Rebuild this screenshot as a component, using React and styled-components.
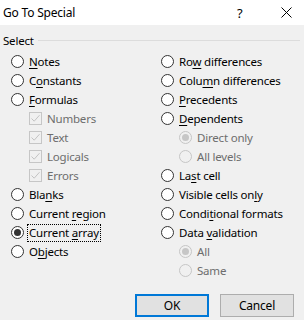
import styled, { createGlobalStyle } from "styled-components";

const GlobalStyle = createGlobalStyle`
  html, body {
    margin: 0;
    padding: 0;
    background: #f0f0f0;
  }
  body {
    font-family: "Noto Sans", "Open Sans", sans-serif;
    font-size: 11.5px;
    letter-spacing: -0.2px;
    color: #000;
  }
`;

const leftItems = [
  { label: "Notes", key: 0 },
  { label: "Constants", key: 1 },
  { label: "Formulas", key: 0 },
  { label: "Numbers", check: true },
  { label: "Text", check: true },
  { label: "Logicals", check: true },
  { label: "Errors", check: true },
  { label: "Blanks", key: 3 },
  { label: "Current region", key: 8 },
  { label: "Current array", key: 8, selected: true, focus: true },
  { label: "Objects", key: 1 },
];

const rightItems = [
  { label: "Row differences", key: 2 },
  { label: "Column differences", key: 4 },
  { label: "Precedents", key: 0 },
  { label: "Dependents", key: 0 },
  { label: "Direct only", sub: true, selected: true },
  { label: "All levels", sub: true },
  { label: "Last cell", key: 2 },
  { label: "Visible cells only", key: 16 },
  { label: "Conditional formats", key: 5 },
  { label: "Data validation", key: 5 },
  { label: "All", sub: true, selected: true },
  { label: "Same", sub: true },
];

function Label({ text, accessKey }) {
  if (accessKey === undefined) return text;
  return (
    <>
      {text.slice(0, accessKey)}
      <u>{text[accessKey]}</u>
      {text.slice(accessKey + 1)}
    </>
  );
}

function Option({ item }) {
  const disabled = item.check || item.sub;
  return (
    <Row $indent={disabled}>
      {item.check ? (
        <CheckBox>
          <svg width="11" height="11" viewBox="0 0 11 11">
            <path d="M1.5 5.5 L4.2 8.2 L9.5 2.2" fill="none" stroke="#c3c3c3" strokeWidth="1" />
          </svg>
        </CheckBox>
      ) : (
        <Radio $disabled={disabled} $selected={item.selected} />
      )}
      <Text $disabled={disabled} $focus={item.focus}>
        <Label text={item.label} accessKey={item.key} />
      </Text>
    </Row>
  );
}

export default function App() {
  return (
    <>
      <GlobalStyle />
      <Dialog>
        <TitleBar>
          <Title>Go To Special</Title>
          <Help>?</Help>
          <Close>
            <svg width="11" height="11" viewBox="0 0 11 11">
              <path d="M0.5 0.5 L10.5 10.5 M10.5 0.5 L0.5 10.5" stroke="#000" strokeWidth="1" />
            </svg>
          </Close>
        </TitleBar>
        <Body>
          <Legend>
            <span>Select</span>
            <Rule />
          </Legend>
          <Columns>
            <Column>
              {leftItems.map((item) => (
                <Option key={item.label} item={item} />
              ))}
            </Column>
            <Column>
              {rightItems.map((item) => (
                <Option key={item.label} item={item} />
              ))}
            </Column>
          </Columns>
        </Body>
        <Buttons>
          <Button $default>OK</Button>
          <Button>Cancel</Button>
        </Buttons>
      </Dialog>
    </>
  );
}

const Dialog = styled.div`
  width: 304px;
  height: 320px;
  display: flex;
  flex-direction: column;
  background: #f0f0f0;
  overflow: hidden;
`;

const TitleBar = styled.div`
  height: 25px;
  background: #fff;
  display: flex;
  align-items: center;
  padding-left: 3px;
`;

const Title = styled.div`
  flex: 1;
  font-size: 12px;
  line-height: 25px;
`;

const Help = styled.div`
  width: 20px;
  font-size: 13px;
  margin-right: 24px;
`;

const Close = styled.div`
  width: 23px;
  display: flex;
  align-items: center;
`;

const Body = styled.div`
  padding: 6px 4px 0 3px;
`;

const Legend = styled.div`
  display: flex;
  align-items: center;
  gap: 4px;
  height: 18px;
`;

const Rule = styled.div`
  flex: 1;
  height: 1px;
  background: #dcdcdc;
`;

const Columns = styled.div`
  display: grid;
  grid-template-columns: 150px 1fr;
  padding-left: 8px;
  margin-top: 3px;
`;

const Column = styled.div`
  display: flex;
  flex-direction: column;
`;

const Row = styled.div`
  height: 19px;
  display: flex;
  align-items: center;
  gap: 4px;
  padding-left: ${(p) => (p.$indent ? "18px" : "0")};
  white-space: nowrap;
`;

const Radio = styled.span`
  box-sizing: border-box;
  width: 13px;
  height: 13px;
  border-radius: 50%;
  border: 1px solid ${(p) => (p.$disabled ? "#c6c6c6" : "#333")};
  background: ${(p) => (p.$disabled ? "#f0f0f0" : "#fff")};
  display: flex;
  align-items: center;
  justify-content: center;
  flex-shrink: 0;

  &::after {
    content: "";
    display: ${(p) => (p.$selected ? "block" : "none")};
    width: 7px;
    height: 7px;
    border-radius: 50%;
    background: ${(p) => (p.$disabled ? "#c6c6c6" : "#333")};
  }
`;

const CheckBox = styled.span`
  box-sizing: border-box;
  width: 13px;
  height: 13px;
  border: 1px solid #c6c6c6;
  display: flex;
  align-items: center;
  justify-content: center;
  flex-shrink: 0;
`;

const Text = styled.span`
  color: ${(p) => (p.$disabled ? "#6d6d6d" : "#000")};
  line-height: 16px;
  padding: 0 1px;
  outline: ${(p) => (p.$focus ? "1px dotted #000" : "none")};

  u {
    text-underline-offset: 2px;
  }
`;

const Buttons = styled.div`
  margin-top: auto;
  display: flex;
  justify-content: flex-end;
  gap: 11px;
  padding: 0 10px 3px 0;
`;

const Button = styled.button`
  box-sizing: border-box;
  width: 74px;
  height: 23px;
  font-family: inherit;
  font-size: 12px;
  letter-spacing: inherit;
  color: #000;
  background: #e1e1e1;
  border: ${(p) => (p.$default ? "2px solid #0078d7" : "1px solid #adadad")};
  padding: 0;
`;
